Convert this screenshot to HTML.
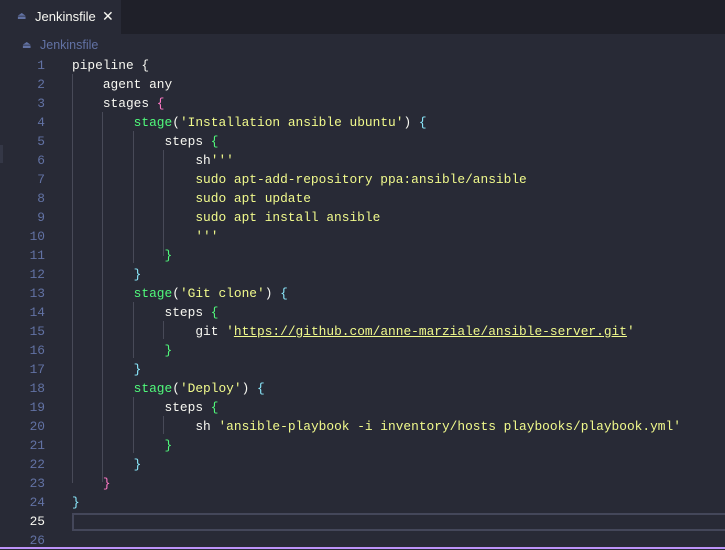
<!DOCTYPE html>
<html><head><meta charset="utf-8"><style>
html,body{margin:0;padding:0;width:725px;height:549px;overflow:hidden;background:#282a36;font-family:"Liberation Sans",sans-serif}
#tabs{position:absolute;left:0;top:0;width:725px;height:34px;background:#1f2029}
#tab{position:absolute;left:0;top:0;width:121px;height:34px;background:#282a36;color:#f8f8f2;font-size:13px}
#tab .n{position:absolute;left:35px;top:9px}
#tab .x{position:absolute;left:102px;top:8px;font-size:14px}
.ic{position:absolute;color:#6272a4;font-size:10px}
#bc{position:absolute;left:40px;top:38px;font-size:12.5px;color:#6272a4}
#code{position:absolute;left:0;top:56px;width:725px;font-family:"Liberation Mono",monospace;font-size:12.85px;line-height:19px;color:#f8f8f2}
.l{position:relative;height:19px}
.ln{position:absolute;width:45px;left:0;text-align:right;color:#6272a4}
.t{position:absolute;left:72px;white-space:pre}
.g{color:#50fa7b}.y{color:#f1fa8c}.p{color:#ff79c6}.c{color:#8be9fd}
.u{text-decoration:underline}
.gd{position:absolute;width:1px;background:#484a58}
#cur{position:absolute;left:72px;top:513px;width:660px;height:18px;border:2px solid #44475a;box-sizing:border-box}
#bot{position:absolute;left:0;top:547px;width:725px;height:2px;background:#bd93f9}
#side{position:absolute;left:0;top:145px;width:3px;height:18px;background:#343746}
</style></head><body>
<div id="tabs"><div id="tab"><span class="ic" style="left:17px;top:11px">⏏</span><span class="n">Jenkinsfile</span><span class="x">✕</span></div></div>
<span class="ic" style="left:22px;top:40px">⏏</span><div id="bc">Jenkinsfile</div>
<div id="side"></div>
<div class="gd" style="left:72px;top:74px;height:409px"></div>
<div class="gd" style="left:102px;top:112px;height:370px"></div>
<div class="gd" style="left:133px;top:131px;height:132px"></div>
<div class="gd" style="left:163px;top:150px;height:106px"></div>
<div class="gd" style="left:133px;top:302px;height:56px"></div>
<div class="gd" style="left:163px;top:321px;height:18px"></div>
<div class="gd" style="left:133px;top:397px;height:56px"></div>
<div class="gd" style="left:163px;top:416px;height:18px"></div>
<div id="cur"></div>
<div id="code"><div class="l"><span class="ln">1</span><span class="t">pipeline {</span></div><div class="l"><span class="ln">2</span><span class="t">    agent any</span></div><div class="l"><span class="ln">3</span><span class="t">    stages <span class="p">{</span></span></div><div class="l"><span class="ln">4</span><span class="t">        <span class="g">stage</span>(<span class="y">'Installation ansible ubuntu'</span>) <span class="c">{</span></span></div><div class="l"><span class="ln">5</span><span class="t">            steps <span class="g">{</span></span></div><div class="l"><span class="ln">6</span><span class="t">                sh<span class="y">'''</span></span></div><div class="l"><span class="ln">7</span><span class="t y">                sudo apt-add-repository ppa:ansible/ansible</span></div><div class="l"><span class="ln">8</span><span class="t y">                sudo apt update</span></div><div class="l"><span class="ln">9</span><span class="t y">                sudo apt install ansible</span></div><div class="l"><span class="ln">10</span><span class="t y">                '''</span></div><div class="l"><span class="ln">11</span><span class="t">            <span class="g">}</span></span></div><div class="l"><span class="ln">12</span><span class="t">        <span class="c">}</span></span></div><div class="l"><span class="ln">13</span><span class="t">        <span class="g">stage</span>(<span class="y">'Git clone'</span>) <span class="c">{</span></span></div><div class="l"><span class="ln">14</span><span class="t">            steps <span class="g">{</span></span></div><div class="l"><span class="ln">15</span><span class="t">                git <span class="y">'<span class="u">https://github.com/anne-marziale/ansible-server.git</span>'</span></span></div><div class="l"><span class="ln">16</span><span class="t">            <span class="g">}</span></span></div><div class="l"><span class="ln">17</span><span class="t">        <span class="c">}</span></span></div><div class="l"><span class="ln">18</span><span class="t">        <span class="g">stage</span>(<span class="y">'Deploy'</span>) <span class="c">{</span></span></div><div class="l"><span class="ln">19</span><span class="t">            steps <span class="g">{</span></span></div><div class="l"><span class="ln">20</span><span class="t">                sh <span class="y">'ansible-playbook -i inventory/hosts playbooks/playbook.yml'</span></span></div><div class="l"><span class="ln">21</span><span class="t">            <span class="g">}</span></span></div><div class="l"><span class="ln">22</span><span class="t">        <span class="c">}</span></span></div><div class="l"><span class="ln">23</span><span class="t">    <span class="p">}</span></span></div><div class="l"><span class="ln">24</span><span class="t"><span class="c">}</span></span></div><div class="l"><span class="ln" style="color:#f8f8f2">25</span><span class="t"></span></div><div class="l"><span class="ln">26</span><span class="t"></span></div></div>
<div id="bot"></div>
</body></html>
